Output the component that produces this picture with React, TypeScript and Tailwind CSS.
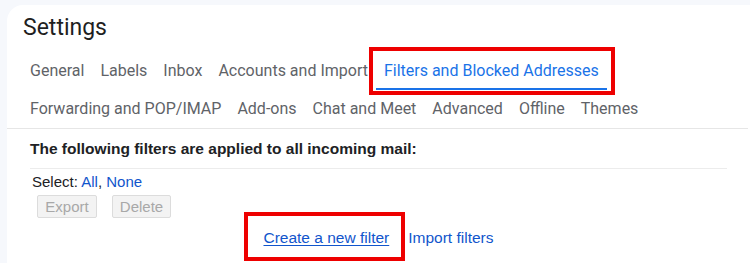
const tabsRow1 = ['General', 'Labels', 'Inbox', 'Accounts and Import']
const tabsRow2 = ['Forwarding and POP/IMAP', 'Add-ons', 'Chat and Meet', 'Advanced', 'Offline', 'Themes']

const sans = 'font-["Roboto","Liberation_Sans",sans-serif]'

function Tab({ label }: { label: string }) {
  return (
    <div className="flex h-[38px] items-center px-2 text-[16px] text-[#5f6368] whitespace-nowrap">
      {label}
    </div>
  )
}

export default function App() {
  return (
    <div className={`h-[263px] w-[750px] overflow-hidden bg-[#f6f8fc] ${sans}`}>
      <div className="ml-[7px] mt-[5px] h-[300px] rounded-tl-2xl bg-white">
        {/* Title */}
        <div className="pl-4 pt-[9px] pb-[10px] text-[23px] leading-7 text-[#1f1f1f]">Settings</div>

        {/* Tabs */}
        <div className="mr-[2px] border-b border-[#e6e6e6] pl-[15px]">
          <div className="flex">
            {tabsRow1.map((t) => (
              <Tab key={t} label={t} />
            ))}
            <div className="relative flex h-[38px] items-center border-b-2 border-[#1a73e8] px-2 pt-[2px] text-[16px] text-[#1a73e8] whitespace-nowrap">
              Filters and Blocked Addresses
              <div className="absolute -left-[7px] -right-[8px] -top-[5px] -bottom-[7px] border-4 border-[#ee0000]" />
            </div>
          </div>
          <div className="flex">
            {tabsRow2.map((t) => (
              <Tab key={t} label={t} />
            ))}
          </div>
        </div>

        {/* Filters content */}
        <div className='px-[23px] font-["Liberation_Sans",Arial,sans-serif] text-[15px] text-[#202124]'>
          <div className="border-b border-[#ececec] pt-[10px] pb-[9px] text-[15.5px] font-bold leading-5">
            The following filters are applied to all incoming mail:
          </div>
          <div className="pl-[2px] pt-[4px] leading-[18px]">
            Select: <span className="text-[#1155cc]">All</span>, <span className="text-[#1155cc]">None</span>
          </div>
          <div className="mt-[4px] flex gap-[15px] pl-[7px]">
            <button className="h-[23px] w-[60px] rounded-[2px] border border-[#dcdcdc] bg-[#f3f3f3] text-[15px] text-[#a8a8a8]">
              Export
            </button>
            <button className="h-[23px] w-[59px] rounded-[2px] border border-[#dcdcdc] bg-[#f3f3f3] text-[15px] text-[#a8a8a8]">
              Delete
            </button>
          </div>
          <div className="mt-[8px] flex justify-center gap-[19px] text-[15.5px] text-[#1155cc]">
            <div className="relative">
              <span className="underline underline-offset-2">Create a new filter</span>
              <div className="absolute -left-[19px] -right-[16px] -top-[14px] -bottom-[12px] border-4 border-[#ee0000]" />
            </div>
            <span>Import filters</span>
          </div>
        </div>
      </div>
    </div>
  )
}
